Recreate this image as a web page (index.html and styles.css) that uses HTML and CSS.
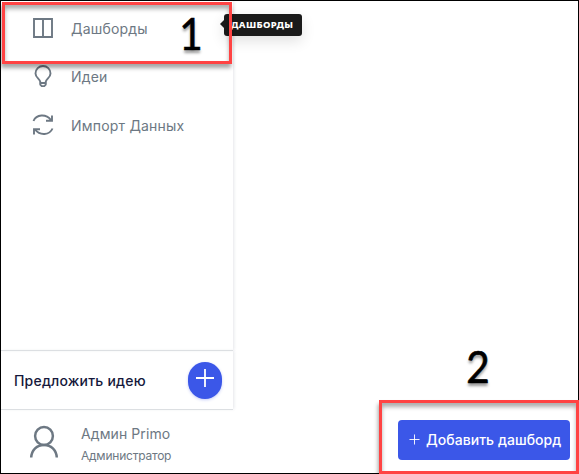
FILE: index.html
```
<!DOCTYPE html>
<html lang="ru">
<head>
<meta charset="utf-8">
<title>Дашборды</title>
<link rel="stylesheet" href="styles.css">
</head>
<body>
<div class="app">
  <aside class="sidebar">
    <nav class="menu">
      <a class="item">
        <svg class="icon" viewBox="0 0 25 25"><path d="M4 4h18v18H4zM13 4v18"/></svg>
        <span>Дашборды</span>
      </a>
      <a class="item">
        <svg class="icon" viewBox="0 0 25 25"><path d="M10.200 19v-1.500C9.400 14.500 5.500 13.500 5.500 9.500a7.500 7.500 0 0 1 15 0c0 4-3.900 5-4.700 8V19zM10.300 19v1.700l1.400 1.400h2.600l1.400-1.400V19"/></svg>
        <span>Идеи</span>
      </a>
      <a class="item">
        <svg class="icon" viewBox="0 0 25 25"><path d="M3.500 9C6.300 2.300 16 1.500 21 8M22 3.500v5.200h-6M22.500 16.500C19.700 23.200 10 24 5 17.500M4 22.500v-5.200h6"/></svg>
        <span>Импорт Данных</span>
      </a>
    </nav>
    <div class="suggest">
      <span>Предложить идею</span>
      <button class="round"><svg viewBox="0 0 20 20"><path d="M10 1v18M1 10h18"/></svg></button>
    </div>
    <div class="user">
      <svg viewBox="0 0 30 34"><circle cx="15" cy="11" r="8.900"/><path d="M2.200 32.500c.4-7.700 5.800-12.600 12.800-12.600s12.400 4.900 12.800 12.600"/></svg>
      <div class="who"><span class="name">Админ Primo</span><span class="role">Администратор</span></div>
    </div>
  </aside>
  <main class="content">
    <button class="add"><svg viewBox="0 0 12 12"><path d="M6 .5v11M.5 6h11"/></svg><span>Добавить дашборд</span></button>
  </main>
</div>
<div class="tooltip">ДАШБОРДЫ</div>
<div class="mark mark-menu"></div>
<div class="mark mark-add"></div>
<div class="step step-one">1</div>
<div class="step step-two">2</div>
</body>
</html>
```
FILE: styles.css
```
* { box-sizing: border-box; }
body { margin: 0; font-family: Inter, "Liberation Sans", sans-serif; background: #fff; }
svg { display: block; fill: none; stroke: currentColor; }
button { border: 0; padding: 0; font: inherit; color: #fff; background: #3b57e8; }
.app { display: grid; grid-template-columns: 232px 1fr; width: 579px; height: 474px; border: 1px solid #000; overflow: hidden; }
.sidebar { display: flex; flex-direction: column; height: 472px; color: #6d7883; white-space: nowrap; }
.menu { flex: 1; padding-top: 3px; box-shadow: 1px 0 3px rgba(40, 50, 80, .12); }
.item { display: flex; align-items: center; height: 48.500px; padding-left: 29px; gap: 16px; font-size: 14px; letter-spacing: .2px; }
.icon { width: 25px; height: 25px; margin-top: -1px; stroke-width: 1.900; }
.suggest { display: flex; align-items: center; justify-content: space-between; height: 60px; padding: 0 11px 0 13px; border-top: 1px solid #dcdfe2; border-bottom: 1px solid #dcdfe2; color: #15183b; font-size: 14px; font-weight: 500; letter-spacing: .2px; box-shadow: 2px 0 3px -1px rgba(40, 50, 80, .12); }
.round { display: grid; place-items: center; width: 34px; height: 37px; border-radius: 17px; box-shadow: 0 1px 3px rgba(59, 87, 232, .3); }
.round svg { width: 20px; height: 20px; margin-bottom: 4px; stroke-width: 1.800; }
.user { display: flex; height: 63px; padding: 15px 0 0 28px; gap: 22px; }
.user svg { width: 30px; height: 34px; stroke-width: 2.500; }
.who { display: flex; flex-direction: column; margin-top: -1px; }
.name { font-size: 14px; line-height: 20px; letter-spacing: .1px; }
.role { font-size: 12px; line-height: 16px; margin-top: 4px; letter-spacing: -.22px; }
.content { display: flex; align-items: flex-end; justify-content: flex-end; padding: 0 8px 13px 0; }
.add { display: flex; align-items: center; width: 172px; height: 40px; padding: 0 0 1px 11px; gap: 6px; border-radius: 4px; font-size: 14px; font-weight: 500; white-space: nowrap; letter-spacing: .05px; }
.add svg { width: 11px; height: 11px; }
.tooltip { position: absolute; left: 224px; top: 14px; width: 78px; height: 22px; padding-left: 7px; border-radius: 3px; background: #1a1a1a; color: #fff; font: 800 9.500px/22px "Noto Sans", sans-serif; letter-spacing: .35px; box-shadow: 0 5px 14px rgba(0, 0, 0, .12); }
.tooltip::before { content: ""; position: absolute; left: -4px; top: 6px; border: solid transparent; border-width: 4px 4px 4px 0; border-right-color: #1a1a1a; }
.mark { position: absolute; border: 3px solid #ff4343; box-shadow: -1px 4px 4px rgba(0, 0, 0, .35), inset 0 4px 4px rgba(0, 0, 0, .32); }
.mark-menu { left: 2px; top: 2px; width: 230px; height: 62px; }
.mark-add { left: 379px; top: 400px; width: 200px; height: 74px; }
.step { position: absolute; font: 400 45px/46px Lato, sans-serif; color: #000; -webkit-text-stroke: .6px #000; text-shadow: 0 3px 3px rgba(0, 0, 0, .4); transform: scaleX(.9); }
.step-one { left: 178px; top: 10px; }
.step-two { left: 465px; top: 343px; }
```
